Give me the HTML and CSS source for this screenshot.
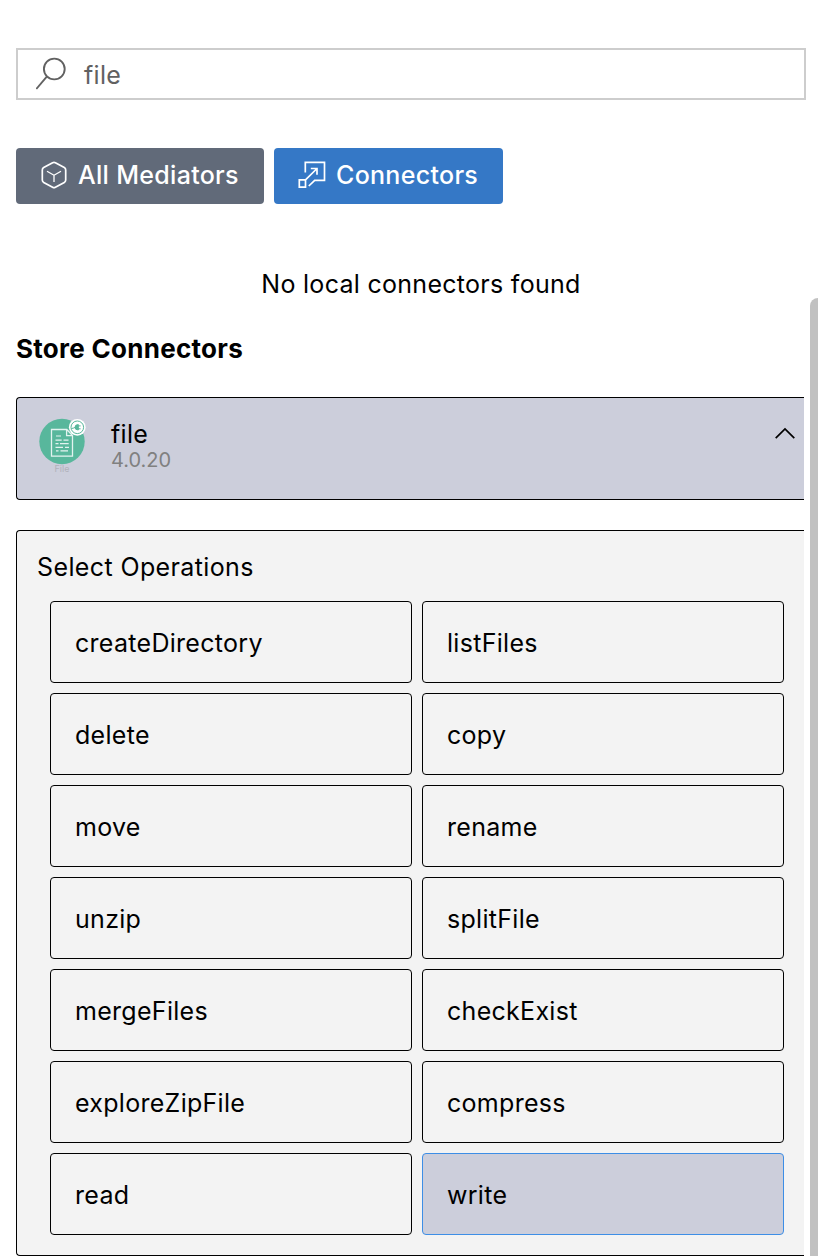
FILE: index.html
```
<!DOCTYPE html>
<html lang="en">
<head>
<meta charset="utf-8">
<title>Connectors</title>
<link rel="stylesheet" href="styles.css">
</head>
<body>
<main class="page">
  <div class="search">
    <svg class="search-icon" width="32" height="34" viewBox="0 0 32 34" fill="none" stroke="#616161" stroke-width="1.9"><circle cx="18.300" cy="12" r="10.400"/><path d="M11 19.400.3 32"/></svg>
    <span class="search-text">file</span>
  </div>
  <nav class="tabs">
    <button class="tab tab-mediators">
      <svg width="28" height="28" viewBox="0 0 28 28" fill="none" stroke="#fff" stroke-width="1.7" stroke-linejoin="round"><path d="M12.6 1.7q1.4-.8 2.8 0l8.9 4.9q1.4.8 1.4 2.4v10q0 1.6-1.4 2.4l-8.900 4.900q-1.400.8-2.800 0l-8.900-4.900Q2.300 20.600 2.300 19V9q0-1.600 1.400-2.400z"/><path stroke-width="1.300" d="m7 10.300 7 4 7-4M14 14.300v6.700"/></svg>
      <span>All Mediators</span>
    </button>
    <button class="tab tab-connectors">
      <svg width="28" height="28" viewBox="0 0 28 28" fill="none" stroke="#fff" stroke-width="1.700"><path d="M7.300 11.500V1.300h19.200v18H16.700L10.800 25"/><path d="M1.300 18.800h6.200v7.400H1.300zM7.500 18.800 19 7.500M12.800 7.500H19v6.300"/></svg>
      <span>Connectors</span>
    </button>
  </nav>
  <p class="empty"><span>No local connectors found</span></p>
  <h2 class="heading"><span>Store Connectors</span></h2>
  <section class="connector">
    <svg class="logo" width="48" height="58" viewBox="0 0 48 58" fill="none"><circle cx="23" cy="24.500" r="22.700" fill="#58b79c"/><path d="M12.500 12.500h15.300l5.700 6v20.600h-21zM27.600 12.500v6.200h5.900" stroke="#e3f3f0" stroke-width="1.300"/><path d="M17 19h5M16.500 23.200h6.200M24.500 23.200h5M16.500 26.600h3M21 26.600h8.700M16.500 30.300h7.500M26 30.300h4M17 33.900h2.500M21.500 33.900h7.500" stroke="#e3f3f0" stroke-width="1.200"/><circle cx="38.300" cy="10.300" r="8.400" fill="#fff"/><circle cx="38.300" cy="10.300" r="6.300" stroke="#58b79c" stroke-width="1"/><path d="M36 10.300q0-2.700 3.300-2.700v5.400Q36 13 36 10.300zM32.500 11.500q2-.200 4-1.200M39 8.900h2.600M39 11.800h2.600" fill="#58b79c" stroke="#58b79c" stroke-width="1"/><text x="15.500" y="55.200" class="logo-text">File</text></svg>
    <div class="meta"><span class="name">file</span><span class="version">4.0.20</span></div>
    <svg class="chevron" width="20" height="12" viewBox="0 0 20 12" fill="none" stroke="#000" stroke-width="1.700"><path d="M.7 11.200 10 1.900l9.300 9.300"/></svg>
  </section>
  <section class="panel">
    <h3 class="panel-title"><span>Select Operations</span></h3>
    <div class="grid">
      <div class="op">createDirectory</div><div class="op">listFiles</div>
      <div class="op">delete</div><div class="op">copy</div>
      <div class="op">move</div><div class="op">rename</div>
      <div class="op">unzip</div><div class="op">splitFile</div>
      <div class="op">mergeFiles</div><div class="op">checkExist</div>
      <div class="op">exploreZipFile</div><div class="op">compress</div>
      <div class="op">read</div><div class="op op-selected">write</div>
    </div>
  </section>
</main>
<div class="scrollbar"></div>
</body>
</html>
```
FILE: styles.css
```
* { box-sizing: border-box; }
html { overflow: hidden; }
body { margin: 0; background: #fff; color: #000; font: 400 25px/32px Inter, "Liberation Sans", sans-serif; letter-spacing: .29px; height: 1256px; overflow: hidden; position: relative; }
svg { display: block; flex: none; }
.page { padding: 48px 14px 0 16px; width: 818px; }
.search { width: 790px; height: 52px; border: 2px solid #cdcdcd; display: flex; align-items: center; padding-left: 18px; gap: 16px; color: #616161; }
.search-text { padding-top: 2px; }
.tabs { display: flex; gap: 10px; margin-top: 48px; }
.tab { height: 56px; border: 0; border-radius: 4px; color: #fff; font: inherit; font-weight: 500; display: flex; align-items: center; padding: 0 0 3px 24px; gap: 10px; white-space: nowrap; letter-spacing: .3px; }
.tab-mediators { width: 248px; background: #616a79; }
.tab-connectors { width: 229px; background: #3578c6; }
.empty { margin: 64px 0 0; width: 810px; text-align: center; }
.heading { margin: 33px 0 0; font-size: 26px; line-height: 32px; font-weight: 700; letter-spacing: .28px; }
.connector { width: 788px; height: 103px; margin-top: 32px; border: 1px solid #000; border-right: 0; border-radius: 4px 0 0 4px; background: #cccedb; display: flex; align-items: flex-start; padding: 19px 9px 0 22px; }
.logo-text { font-size: 9px; fill: #b0b1ba; letter-spacing: 0; }
.meta { margin-left: 24px; display: flex; flex-direction: column; flex: 1; padding-top: 1px; }
.name { line-height: 32px; }
.version { font-size: 20px; line-height: 20px; color: #808080; letter-spacing: 0; }
.chevron { margin-top: 10px; }
.panel { width: 788px; height: 726px; margin-top: 30px; border: 1px solid #000; border-right: 0; border-radius: 4px 0 0 4px; background: #f3f3f3; padding: 20px 20px 0 20px; }
.panel-title { margin: 0; font-size: 25px; font-weight: 400; line-height: 32px; letter-spacing: .38px; }
.grid { display: grid; grid-template-columns: 362px 362px; grid-auto-rows: 82px; gap: 10px; margin: 18px 0 0 13px; }
.op { border: 1px solid #000; border-radius: 4px; padding-left: 24px; display: flex; align-items: center; padding-top: 2px; }
.op-selected { background: #cccedb; border-color: #3d8ee6; }
.scrollbar { position: absolute; left: 810px; top: 298px; width: 16px; height: 970px; border-radius: 9px; background: #c1c1c1; }
```
